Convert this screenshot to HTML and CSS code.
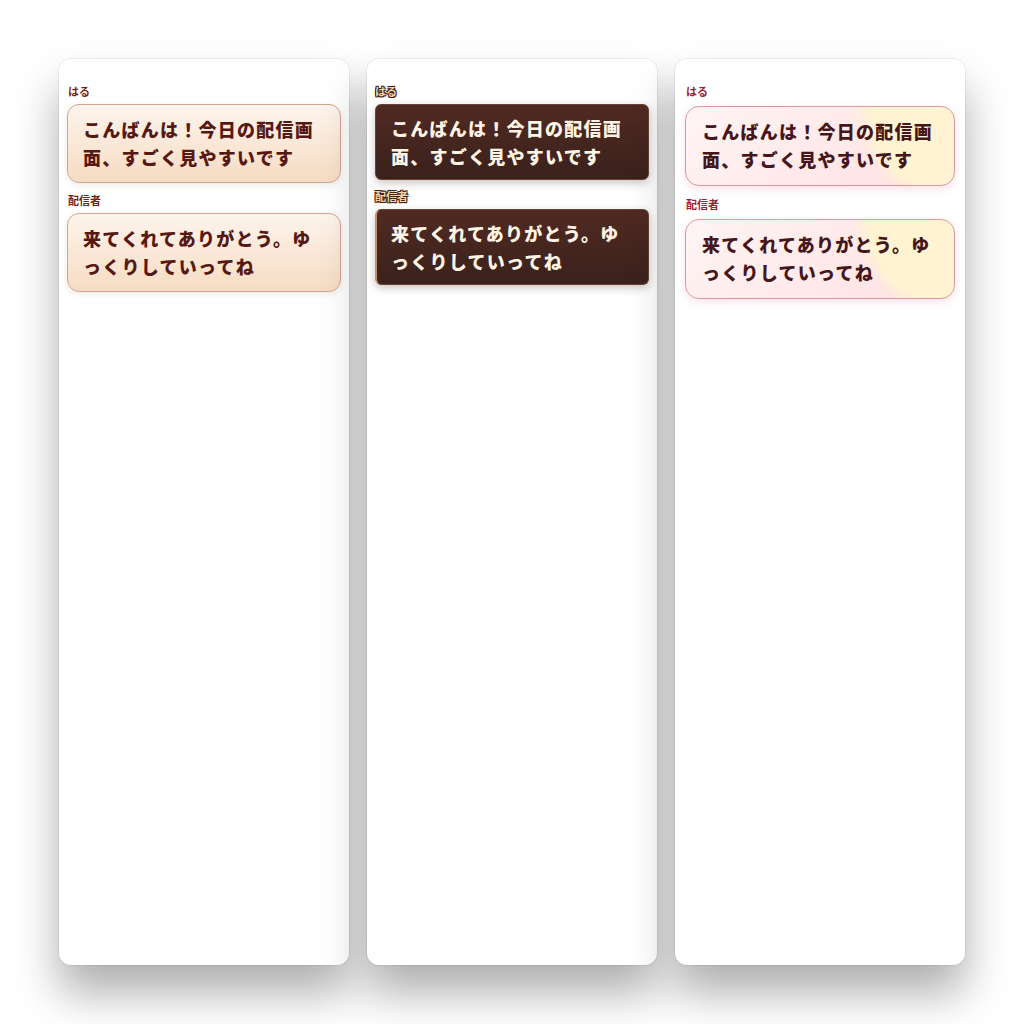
FILE: index.html
```html
<!DOCTYPE html>
<html lang="ja">
<head>
  <meta charset="UTF-8" />
  <title>チャット表示テーマ</title>
  <meta name="viewport" content="width=device-width, initial-scale=1" />
  <link rel="stylesheet" href="styles.css">
</head>
<body>

  <main class="themes">

    <!-- クリーム -->
    <section class="panel cream">
      <div class="msg">
        <div class="name">はる</div>
        <div class="bubble">こんばんは！今日の配信画面、すごく見やすいです</div>
      </div>
      <div class="msg">
        <div class="name">配信者</div>
        <div class="bubble">来てくれてありがとう。ゆっくりしていってね</div>
      </div>
    </section>

    <!-- チョコ -->
    <section class="panel choco">
      <div class="msg">
        <div class="name">はる</div>
        <div class="bubble">こんばんは！今日の配信画面、すごく見やすいです</div>
      </div>
      <div class="msg host">
        <div class="name">配信者</div>
        <div class="bubble">来てくれてありがとう。ゆっくりしていってね</div>
      </div>
    </section>

    <!-- いちごミルク -->
    <section class="panel berry">
      <div class="msg">
        <div class="name">はる</div>
        <div class="bubble">こんばんは！今日の配信画面、すごく見やすいです</div>
      </div>
      <div class="msg">
        <div class="name">配信者</div>
        <div class="bubble">来てくれてありがとう。ゆっくりしていってね</div>
      </div>
    </section>

  </main>

</body>
</html>
```

FILE: styles.css
```css
body {
  margin: 0;
  background: #fff;
  font-family: "Noto Sans CJK JP", "Noto Sans", sans-serif;
}
.themes {
  display: flex;
  gap: 18px;
  padding: 59px 0 59px 59px;
}
.panel {
  width: 290px;
  height: 906px;
  box-sizing: border-box;
  background: #fff;
  border-radius: 12px;
  padding: 24px 8px;
  display: flex;
  flex-direction: column;
  gap: 7px;
  box-shadow: 0 0 0 1px rgba(0,0,0,0.06), 0 28px 45px rgba(0,0,0,0.32);
}
.name {
  font-size: 11px;
  font-weight: 700;
  line-height: 16px;
  margin-bottom: 7px;
}
.bubble {
  font-size: 18px;
  font-weight: 900;
  line-height: 28px;
  letter-spacing: 0.07em;
}

/* クリーム */
.cream {
  gap: 9px;
}
.cream .name {
  color: #7a1e18;
  padding-left: 1px;
  margin-bottom: 5px;
}
.cream .bubble {
  color: #561812;
  padding: 10px 15px 11px;
  border: 1px solid #cfa592;
  border-radius: 12px;
  background: linear-gradient(180deg, #fdf4ec 0%, #f6dcc3 100%);
  box-shadow: 0 2px 6px rgba(150,90,60,0.14);
}

/* チョコ */
.choco {
  padding-top: 24px;
  gap: 8px;
}
.choco .name {
  color: #f3d4ac;
  margin-bottom: 5px;
  text-shadow: -1px -1px 0 #3a1e16, 1px -1px 0 #3a1e16, -1px 1px 0 #3a1e16, 1px 1px 0 #3a1e16, 0 1px 0 #3a1e16, 0 -1px 0 #3a1e16;
}
.choco .bubble {
  color: #fff4e4;
  padding: 9px 15px 9px;
  border: 1px solid #6a4234;
  border-radius: 6px;
  background: linear-gradient(180deg, #502a22 0%, #3a211c 100%);
  box-shadow: 0 3px 8px rgba(40,20,10,0.25);
}
.choco .host .bubble {
  border-left: 2px solid #c7906c;
  padding-left: 14px;
}

/* いちごミルク */
.berry {
  padding: 24px 10px;
  gap: 10px;
}
.berry .name {
  color: #9a2236;
  padding-left: 1px;
  margin-bottom: 7px;
}
.berry .bubble {
  color: #45161a;
  padding: 10px 16px 12px;
  border: 1.5px solid #dc97a0;
  border-radius: 14px;
  background:
    radial-gradient(circle at 100% 0%, #fff3d2 0, #fff3d2 85px, rgba(255,243,210,0) 100px),
    linear-gradient(135deg, #fff4f4 0%, #ffe0e0 100%);
  box-shadow: 0 3px 8px rgba(220,120,140,0.22);
}
```
